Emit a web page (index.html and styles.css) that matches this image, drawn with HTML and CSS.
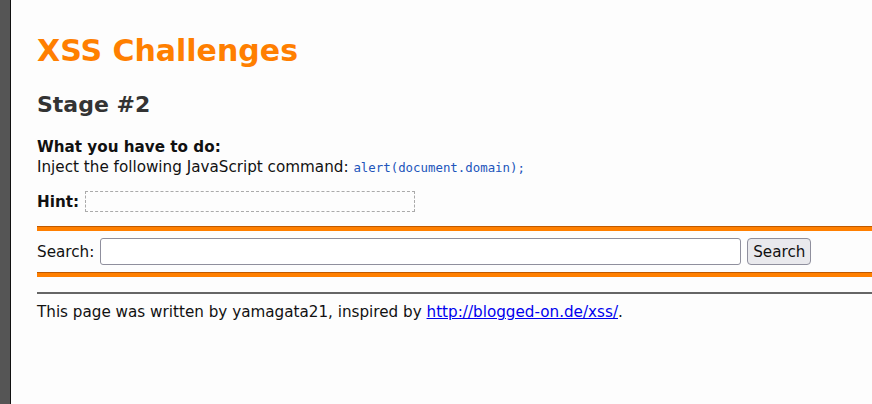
FILE: index.html
```html
<!DOCTYPE html>
<html>
<head>
<meta charset="utf-8">
<link rel="stylesheet" href="styles.css">
</head>
<body>
<div class="page">
  <h1 class="title">XSS Challenges</h1>
  <h2 class="stage">Stage #2</h2>
  <div class="task">
    <b>What you have to do:</b><br>
    Inject the following JavaScript command: <code class="cmd">alert(document.domain);</code>
  </div>
  <div class="hint-row"><b>Hint:</b> <span class="hint-box"></span></div>
  <div class="search-block">
    <form class="search-form">
      <label class="search-label">Search:</label>
      <input class="search-input" type="text">
      <button class="search-btn" type="button">Search</button>
    </form>
  </div>
  <hr class="rule">
  <p class="footer">This page was written by yamagata21, inspired by <a href="#">http://blogged-on.de/xss/</a>.</p>
</div>
</body>
</html>
```
FILE: styles.css
```css
html, body {
  margin: 0;
  padding: 0;
  background: #fdfdfd;
}
body {
  font-family: "DejaVu Sans", Verdana, sans-serif;
  font-size: 15.2px;
  color: #111;
  min-height: 404px;
  border-left: 10px solid #555;
  box-sizing: border-box;
}
.page {
  border-left: 1px solid #111;
  min-height: 404px;
  padding: 1px 0 0 26px;
  box-sizing: border-box;
}
.title {
  color: #ff7f00;
  font-size: 30px;
  font-weight: bold;
  margin: 32px 0 0 0;
  line-height: 36px;
}
.stage {
  color: #333;
  font-size: 22px;
  margin: 22px 0 0 0;
  line-height: 28px;
}
.task {
  margin-top: 18px;
  font-size: 15.2px;
  line-height: 20px;
}
.cmd {
  font-family: "DejaVu Sans Mono", monospace;
  font-size: 12.4px;
  color: #2255bb;
}
.hint-row {
  margin-top: 13px;
  display: flex;
  align-items: center;
  gap: 6px;
  font-size: 15.2px;
}
.hint-box {
  display: inline-block;
  width: 330px;
  height: 21px;
  box-sizing: border-box;
  border: 1px dashed #aaa;
}
.search-block {
  margin-top: 14px;
}
.search-block::before,
.search-block::after {
  content: "";
  display: block;
  height: 4px;
  border-top: 1px solid #c05a00;
  background: #ff7f00;
}
.search-form {
  display: flex;
  align-items: center;
  margin: 0;
  padding: 7px 0 7px 0;
  font-size: 15.2px;
}
.search-label {
  margin-right: 6px;
}
.search-input {
  width: 641px;
  height: 27px;
  box-sizing: border-box;
  border: 1px solid #8f8f9d;
  border-radius: 3px;
  background: #fff;
  margin: 0 6px 0 0;
}
.search-btn {
  height: 27px;
  width: 64px;
  padding: 0;
  font-family: "DejaVu Sans", sans-serif;
  font-size: 15.2px;
  color: #111;
  background: #e9e9ed;
  border: 1px solid #8f8f9d;
  border-radius: 4px;
}
.rule {
  margin: 15px 0 0 0;
  border: 0;
  border-top: 2px solid #666;
  height: 0;
}
.footer {
  margin: 9px 0 0 0;
  font-size: 15.2px;
}
.footer a {
  color: #0000ee;
}
```
